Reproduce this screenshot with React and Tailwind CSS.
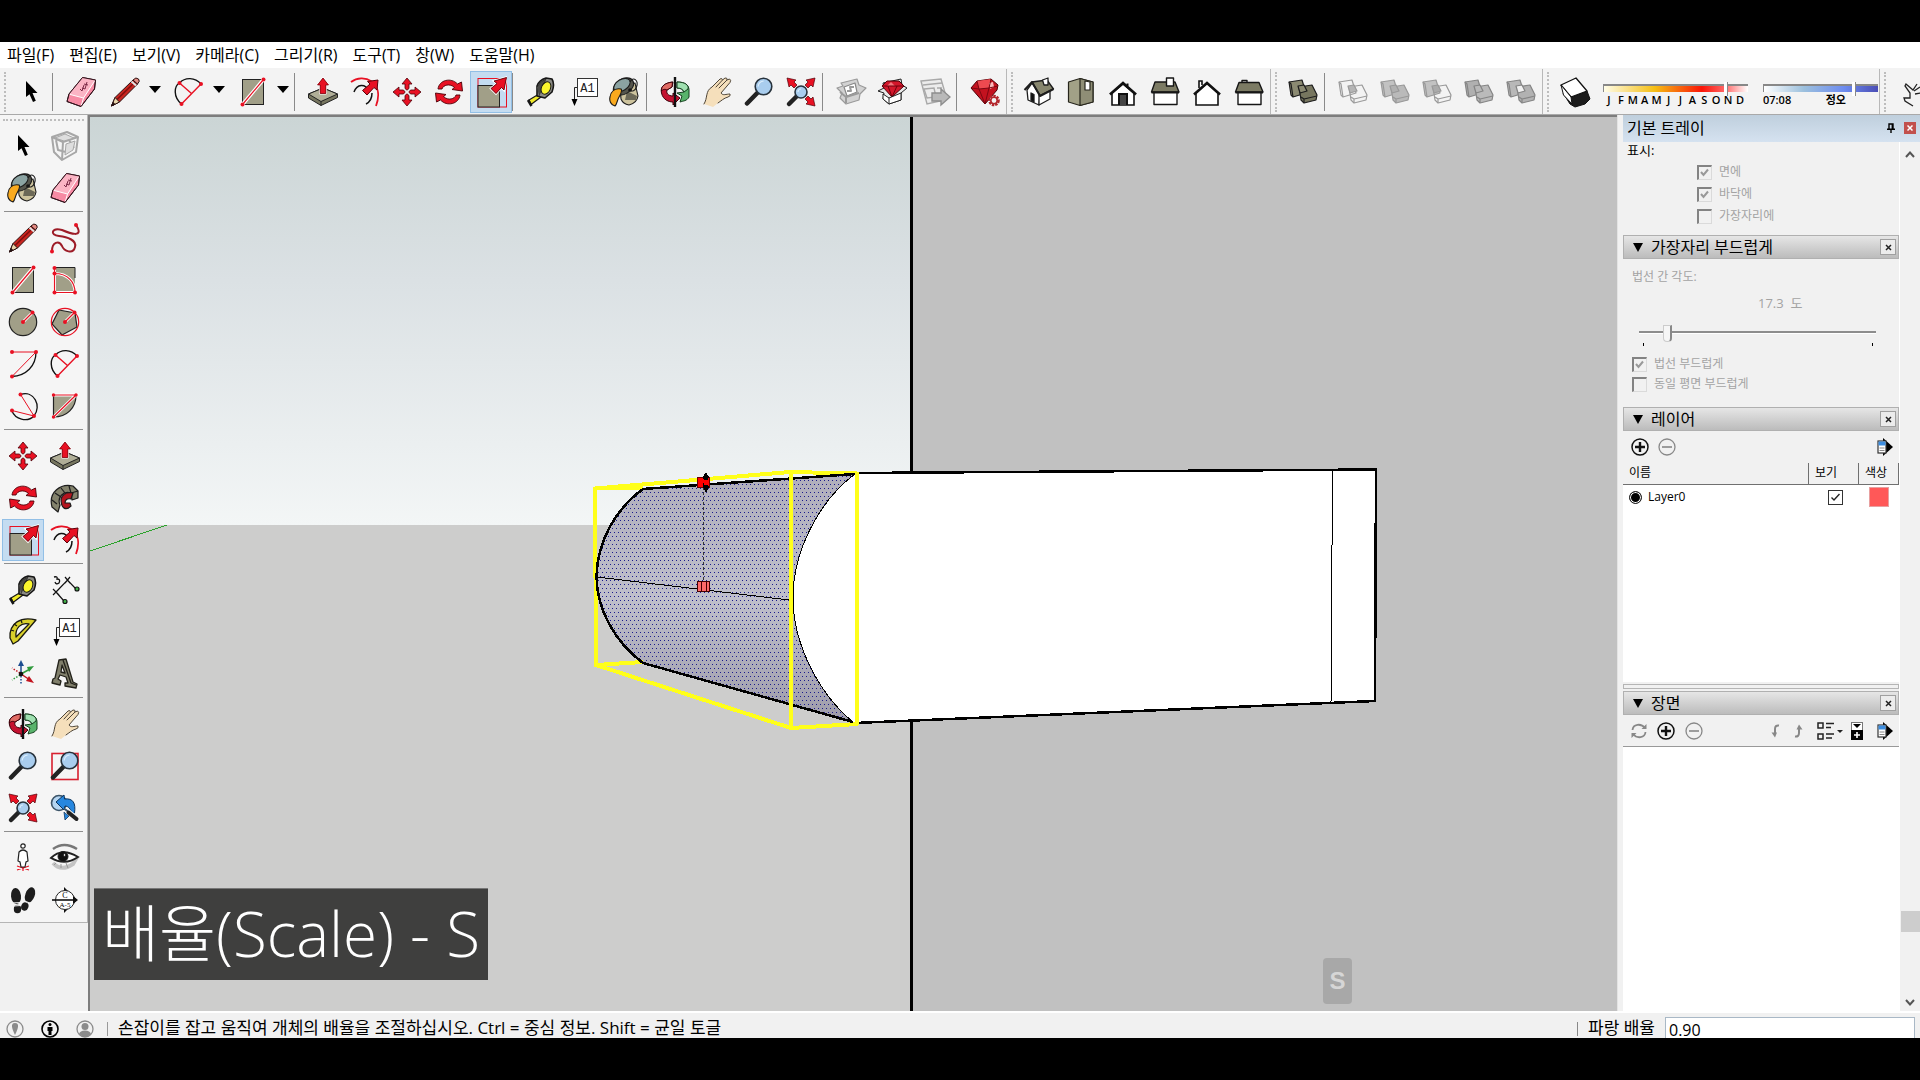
import React, { useState } from 'react';
import clsx from 'clsx';

const RED = '#e81123';
const STONE = '#a19f88';

// Small shared drawings used by more than one icon
const Dot = ({ x, y, r = 2, fill = RED }) => <circle cx={x} cy={y} r={r} fill={fill} />;

const Lens = ({ x, y, r, hx, hy }) => (
  <g>
    <path d={`M${x} ${y} L${hx} ${hy}`} stroke="#222" strokeWidth="4.5" strokeLinecap="round" />
    <circle cx={x} cy={y} r={r} fill="#a9cdee" stroke="#27323c" strokeWidth="1.6" />
    <path d={`M${x - r + 3} ${y} a${r - 3} ${r - 3} 0 0 1 ${r - 3} -${r - 3}`} fill="none" stroke="#d9ecfb" strokeWidth="1.2" />
  </g>
);

const Boxes = ({ back, front, overlap, line = '#8a8a8a' }) => (
  <g stroke={line} strokeWidth="1.2" strokeLinejoin="round">
    <path d="M2 6 L15 4 L19 17 L6 21 L4 19 Z" fill={back} />
    <path d="M2 6 L4 8 L6 21" fill="none" />
    <path d="M12 11 L25 9 L30 19 L29 24 L17 27 L14 24 Z" fill={front} />
    <path d="M14 21 L17 23 L30 20 M17 23 L17 27" fill="none" />
    <path d="M11 10 L17 9 L20 15 L13 17 Z" fill={overlap} />
  </g>
);

const icons = {
  select: <path d="M11 5 L11 21 L14.5 18.2 L18 26 L20.8 24.8 L17.5 17 L22.5 17 Z" fill="#000" />,
  eraser: (
    <g stroke="#33131c" strokeWidth="1" strokeLinejoin="round">
      <path d="M17.5 1.5 L30.5 4 L29.5 13 L16 30.5 L2 25.5 L4 18 Z" fill="#f78ba4" />
      <path d="M17.5 1.5 L30.5 4 L19 22 L4 18 Z" fill="#fbb4c4" stroke="none" />
      <path d="M4.5 18.3 L18.5 22 L30 4.5 M18.5 22 L16.3 29.5" fill="none" stroke="#fff" />
      <path d="M15 13 L17 15 L19 9 M17 12 L20 13 L22 6 M19 8 L23 9" fill="none" stroke="#7b2946" />
      <path d="M17.5 1.5 L30.5 4 L29.5 13 L16 30.5 L2 25.5 L4 18 Z" fill="none" />
    </g>
  ),
  pencil: (
    <g stroke="#2a1010" strokeWidth="1" strokeLinejoin="round">
      <path d="M2.5 30 L6 21.5 L24 4 L28.5 8 L10.5 26 Z" fill="#c9251f" />
      <path d="M8 23.5 L26 6" stroke="#7d0f10" strokeWidth="1.5" />
      <path d="M2.5 30 L6 21.5 L10.5 26 Z" fill="#e8d5ab" />
      <path d="M2.5 30 L4 26.5 L6 28.3 Z" fill="#111" />
      <path d="M24 4 Q27 0.5 29.5 3 Q31.5 5 28.5 8 Z" fill="#e58b83" />
      <path d="M22.5 5.5 L27 9.5" stroke="#e4e4e4" strokeWidth="2" />
    </g>
  ),
  arc: (
    <g fill="none">
      <path d="M8.5 28 C0 21 1 10 6.5 7 C12 1 22 1 28 8" stroke="#111" strokeWidth="1.4" />
      <path d="M28 8 L8.5 28 M6.5 7 L18.5 17.5" stroke={RED} strokeWidth="1.4" />
      <Dot x={6.5} y={7} /><Dot x={28} y={8} /><Dot x={8.5} y={28} />
    </g>
  ),
  rect: (
    <g>
      <rect x="5.5" y="3.5" width="21" height="25" fill={STONE} stroke="#222" />
      <path d="M5.5 28.5 L26.5 3.5" stroke="#fff" strokeWidth="3.5" />
      <path d="M5.5 28.5 L26.5 3.5" stroke={RED} strokeWidth="1.2" />
      <Dot x={5.5} y={28.5} /><Dot x={26.5} y={3.5} />
    </g>
  ),
  pushPull: (
    <g stroke="#222" strokeWidth="1" strokeLinejoin="round">
      <path d="M1.5 18 L16 12 L30.5 18 L30.5 21.5 L14 29.5 L1.5 22 Z" fill="#77765f" />
      <path d="M1.5 18 L16 12 L30.5 18 L14 25.5 Z" fill="#b0ae97" />
      <path d="M14 25.5 L14 29.5" />
      <path d="M16 2 L21.5 9 L18.8 9 L18.8 17.5 L13.2 17.5 L13.2 9 L10.5 9 Z" fill={RED} stroke="#fff" strokeWidth="2" paintOrder="stroke" />
      <path d="M16 2 L21.5 9 L18.8 9 L18.8 17.5 L13.2 17.5 L13.2 9 L10.5 9 Z" fill={RED} stroke="#6d0009" strokeWidth="0.7" />
    </g>
  ),
  offset: (
    <g fill="none">
      <path d="M2 6 C14 -3 36 5 27 30" stroke={RED} strokeWidth="1.8" />
      <path d="M5 16 C8 8 16 7 20 15 M23 17 C23 23 21 26 17 28" stroke="#111" strokeWidth="1.5" />
      <path d="M29 4 L28 14 L25 11.5 L18 19 L13.5 14.5 L21 8 L18.5 5.5 Z" fill={RED} stroke="#5a0008" strokeWidth="1" />
    </g>
  ),
  move: (
    <g>
      {[0, 90, 180, 270].map((deg) => (
        <path
          key={deg}
          d="M16 2 L21 8 L18 8 L18 12.5 L16 14.2 L14 12.5 L14 8 L11 8 Z"
          fill={RED}
          stroke="#4d0007"
          strokeWidth="0.8"
          transform={`rotate(${deg} 16 16)`}
        />
      ))}
    </g>
  ),
  rotate: (
    <g fill={RED} stroke="#4d0007" strokeWidth="0.9" strokeLinejoin="round">
      <path d="M5 13 C6 4 18 1 24.5 8 L28.5 6 L29.5 15 L19 13.5 L21.5 11.5 C17 7 10 9 9 13 Z" />
      <path d="M27 19 C26 28 14 31 7.5 24 L3.5 26 L2.5 17 L13 18.5 L10.5 20.5 C15 25 22 23 23 19 Z" />
    </g>
  ),
  scale: (
    <g>
      <rect x="3" y="2.5" width="28.5" height="28.5" fill="none" stroke={RED} strokeWidth="1" />
      <rect x="3" y="9.5" width="21.5" height="21.5" fill={STONE} stroke="#222" />
      <path d="M31.5 1.5 L29 14 L26.5 11.5 L21 17.5 L16 12.5 L22 7.5 L19 5 Z" fill={RED} stroke="#fff" strokeWidth="2.4" paintOrder="stroke" />
      <path d="M31.5 1.5 L29 14 L26.5 11.5 L21 17.5 L16 12.5 L22 7.5 L19 5 Z" fill={RED} stroke="#4d0007" strokeWidth="0.8" />
    </g>
  ),
  tape: (
    <g stroke="#161616" strokeLinejoin="round">
      <path d="M4 24 L14 18 L16 21 L6 28.5 Z" fill="#f1ea28" strokeWidth="1.2" />
      <path d="M3 24 L6.5 30" strokeWidth="2.5" />
      <path d="M12 10 Q14 4 21 2 L27 3 Q30 8 27 16 L20 22 L12 20 Z" fill="#8b8b85" strokeWidth="1.6" />
      <path d="M12 11 Q15 5 21 3 L14 20" fill="#4a4a46" strokeWidth="0.5" />
      <ellipse cx="21" cy="12" rx="4.5" ry="6.5" fill="#fbf62d" strokeWidth="1" transform="rotate(25 21 12)" />
    </g>
  ),
  text: (
    <g>
      <rect x="10.5" y="2.5" width="20" height="18" fill="#fff" stroke="#333" />
      <text x="20.5" y="15.500" textAnchor="middle" fontSize="12" fontFamily="Liberation Mono, monospace" fill="#222">A1</text>
      <path d="M10 11.5 H7.5 V24" fill="none" stroke="#222" />
      <path d="M4.5 23 H10.5 L7.5 30 Z" fill="#000" />
    </g>
  ),
  paint: (
    <g stroke="#1c1c1c" strokeWidth="1.1" strokeLinejoin="round">
      <path d="M11 12 L26 7 L29 20 Q28 27 20 29 Q14 28 12 23 Z" fill="#cdc39d" />
      <path d="M18 15 L28 20 L27 24 L16 24 Z" fill="#6b6857" stroke="none" />
      <ellipse cx="14.500" cy="10.500" rx="11" ry="7.500" fill="#55554c" transform="rotate(-32 14.500 10.500)" />
      <ellipse cx="13" cy="9" rx="9" ry="5.500" fill="#8ba3a2" transform="rotate(-32 13 9)" />
      <path d="M1 21 C2 15 6 12 12 13 C14 15 11 19 9.500 22 C8 25 8 28 6 30 C2 29 0 25 1 21 Z" fill="#faaa1e" />
      <path d="M21 6 C24 0 30 4 27.500 11 C26 15 23 16 21 14" fill="none" />
      <circle cx="21" cy="14" r="1.300" fill="#111" />
    </g>
  ),
  orbit: (
    <g strokeLinejoin="round" strokeWidth="1">
      <path d="M18 6 C26 6 30 9 30 14 L30 21 C28 25 24 25 21 26 L23 20 L18 17 L25 16 C24 13 21 12 18 12 Z" fill="#59b36b" stroke="#153f1e" />
      <path d="M18 6 C26 6 30 9 29 13 L25 16 C24 13 21 12 18 12 Z" fill="#9fe0b0" stroke="#153f1e" />
      <path d="M14 6 C5 7 1 11 2.5 17 C4 24 10 26 14 26 L14 29 L21 22 L14 17 L14 20 C9 20 7 17 8 14 L13 11 Z" fill="#c41230" stroke="#3b0009" />
      <path d="M13.5 6 C6 7 2 10 2.5 15 C5 12 8 14 8 14 L13 11 Z" fill="#e06b64" stroke="#3b0009" />
      <path d="M16 1 V31" stroke="#111" strokeWidth="2.4" />
    </g>
  ),
  pan: (
    <g strokeLinejoin="round" strokeLinecap="round">
      <path
        d="M3 28 C7 22 4 15 11 11 L19 3 Q21 1.5 21.5 4 L24 2 Q26.5 1.5 26 4 L28.5 3 Q30.5 4 29 6.5 L20 17 C22 20 25 18 29 18 Q30 20 27 21 C23 22 20 25 17 27 L12 31 Z"
        fill="#f5dfbb"
      />
      <path
        d="M3 28 C7 22 4 15 11 11 L19 3 Q21 1.5 21.5 4 L24 2 Q26.5 1.5 26 4 L28.5 3 Q30.5 4 29 6.5 L20 17 C22 20 25 18 29 18 Q30 20 27 21 C23 22 20 25 17 27 M15 11 L21.500 4 M18 12 L26 4"
        fill="none"
        stroke="#4e4538"
      />
    </g>
  ),
  zoom: <Lens x={20.5} y={10.5} r={8.3} hx={4} hy={27.5} />,
  zoomWindow: (
    <g>
      <rect x="3" y="3.5" width="26" height="26" fill="none" stroke="#d8202f" strokeWidth="1.6" />
      <Lens x={20.5} y={10.5} r={8.3} hx={4} hy={27.5} />
    </g>
  ),
  zoomExtents: (
    <g>
      <Lens x={16} y={16} r={6} hx={4} hy={28} />
      <path d="M2 2 L11 4 L9 6 L12 9 L9 12 L6 9 L4 11 Z" fill={RED} stroke="#4d0007" strokeWidth="0.7" />
      <path d="M30 2 L21 4 L23 6 L20 9 L23 12 L26 9 L28 11 Z" fill={RED} stroke="#4d0007" strokeWidth="0.7" />
      <path d="M30 30 L21 28 L23 26 L20 23 L23 20 L26 23 L28 21 Z" fill={RED} stroke="#4d0007" strokeWidth="0.7" />
    </g>
  ),
  previous: (
    <g>
      <circle cx="10" cy="11" r="7.500" fill="#b5d5f1" stroke="#3c5468" strokeWidth="1.600" />
      <path d="M7 10 L15 3 L15.500 7 C24 6 27 11 25.500 21 L23 22 C22 17 19 14 16 14 L15 18 Z" fill="#2787df" stroke="#0c345c" strokeWidth="1" />
      <path d="M15 20 L20 24 L16 28 Z" fill="#2787df" stroke="#0c345c" strokeWidth="0.8" />
      <path d="M16 17 L28 27" stroke="#f2f2f2" strokeWidth="5" />
      <path d="M15 16.500 L19 19.500" stroke="#3c5468" strokeWidth="2" />
      <path d="M19.500 20.500 L27.500 27" stroke="#222" strokeWidth="4" strokeLinecap="round" />
    </g>
  ),
  warehouse: (
    <g fill="#d2d2d2" stroke="#9a9a9a" strokeWidth="1.2" strokeLinejoin="round">
      <path d="M2 12 L8 10 L6 7 L22 3 L24 9 L31 12 L25 18 L24 24 L11 28 L5 22 L7 17 Z" />
      <path d="M9 11 L20 7 L22 16 L12 20 Z" fill="#fff" stroke="#888" />
      <path d="M5 16 L11 21 L11 27 M11 21 L24 17 M12 15 L16 15 L15 11 L19 11" fill="none" strokeWidth="2" />
    </g>
  ),
  warehouseGem: (
    <g strokeLinejoin="round" strokeWidth="1">
      <path d="M1 15 L7 12 L6 7 L24 3 L25 9 L30 12 L24 17 L24 24 L12 28 L6 23 L7 17 Z" fill="#e9e9e9" stroke="#222" />
      <path d="M5 10 L10 5 L22 5 L27 10 L15 21 Z" fill="#d3172b" stroke="#4d0007" />
      <path d="M10 10 L14 6 L18 10 Z" fill="#f3747c" />
      <path d="M5 10 H27 M15 21 L11 10 M15 21 L20 10" stroke="#70000c" fill="none" />
      <path d="M6 18 L12 22 L24 17 L24 24 L12 28 L6 23 Z" fill="#fff" stroke="#222" />
      <path d="M12 22 V28" stroke="#222" />
    </g>
  ),
  layout: (
    <g fill="#ececec" stroke="#a9a9a9" strokeWidth="1.4">
      <path d="M2 5 L22 3 L27 20 L26 24 L8 28 Z" />
      <path d="M4 9 L23 7 M5 13 L15 12 L17 21 L8 22 Z M18 12 L23 12" fill="none" />
      <path d="M13 17 H22 V13 L31 21 L22 29 V25 H13 Z" fill="#b9b9b9" stroke="#8d8d8d" />
    </g>
  ),
  gem: (
    <g strokeLinejoin="round" strokeWidth="1">
      <path d="M2 12 L8 5 L22 3 L29 9 L28 14 L16 28 Z" fill="#c3121f" stroke="#4d0007" />
      <path d="M8 5 L22 3 L20 12 L10 13 Z" fill="#ee4a50" stroke="none" />
      <path d="M20 7 L24 6 L25 11 L21 13 Z" fill="#fbb9bb" />
      <path d="M2 12 L10 13 L20 12 L29 10 M8 5 L10 13 L16 28 L20 12 L22 3" fill="none" stroke="#7d0711" />
      <circle cx="25" cy="24.5" r="4.6" fill="#f2f2f2" stroke="#b3262c" strokeWidth="2.4" strokeDasharray="2.4 1" />
      <circle cx="25" cy="24.5" r="3.2" fill="none" stroke="#b3262c" strokeWidth="1.6" />
    </g>
  ),
  viewIso: (
    <g stroke="#1d1d1d" strokeWidth="1.3" strokeLinejoin="round">
      <path d="M4 14 L9 7 L17 19 L16 29 L5 24 Z" fill="#fff" />
      <path d="M16 19 L27 14 L27 23 L16 29 Z" fill="#fff" />
      <path d="M9 6 L24 4 L30.500 13 L17 19.500 Z" fill="#87866e" />
      <path d="M1.500 14 L9 6 L17 20 L30.500 13" fill="none" strokeWidth="2" />
      <path d="M19.500 4 L25 2 L25 9 L21 9 Z" fill="#fff" />
      <path d="M8 17 L11 18.500 L11 26 L8 24.500 Z" fill="#111" />
    </g>
  ),
  viewTop: (
    <g stroke="#26251c" strokeWidth="1.2" strokeLinejoin="round">
      <path d="M3.500 6 L15 2.500 L28 6 V26 L15 29.500 L3.500 26 Z" fill="#a2a187" />
      <path d="M15 2.500 L28 6 V26 L15 29.500 Z" fill="#8f8e76" />
      <path d="M20 5 L25 6 V14 L20 14 Z" fill="#fff" />
    </g>
  ),
  viewFront: (
    <g stroke="#111" strokeWidth="2" strokeLinejoin="miter">
      <path d="M5 17 L16 8 L27 17 V29 H5 Z" fill="#fff" strokeWidth="1.600" />
      <path d="M12 29 V18 H20 V29" fill="#444" />
      <path d="M3 18.500 L16 7 L29 18.500" fill="none" strokeWidth="2.800" />
      <path d="M20.500 10 V7.500" />
    </g>
  ),
  viewRight: (
    <g stroke="#161616" strokeWidth="1.400" strokeLinejoin="round">
      <rect x="5" y="15" width="23" height="13.500" fill="#fff" />
      <path d="M6 6 H26 L30 16 H2.500 Z" fill="#7c7b64" />
      <path d="M2.500 16.500 H30" strokeWidth="2" />
      <rect x="17.500" y="2" width="7" height="8" fill="#fff" />
    </g>
  ),
  viewBack: (
    <g stroke="#111" strokeWidth="1.600">
      <path d="M8 12 V5 H11 V9" fill="#fff" />
      <path d="M5 17 L16 7 L27 17 V29 H5 Z" fill="#fff" />
      <path d="M3 18.500 L16 7 L29 18.500" fill="none" strokeWidth="2.600" />
    </g>
  ),
  viewLeft: (
    <g stroke="#161616" strokeWidth="1.400" strokeLinejoin="round">
      <path d="M9 7 V4.500 H14 V7" fill="#ddd" />
      <rect x="5" y="15" width="23" height="13.500" fill="#fff" />
      <path d="M6 6.500 H26 L30 16 H2.500 Z" fill="#7c7b64" />
      <path d="M2.500 16.500 H30" strokeWidth="2" />
    </g>
  ),
  outerShell: <Boxes back="#8b8a72" front="#77765f" overlap="#8b8a72" line="#1d1d1d" />,
  intersect: <Boxes back="none" front="none" overlap="#b5b5b5" line="#9b9b9b" />,
  union: <Boxes back="#c2c2c2" front="#bababa" overlap="#b0b0b0" line="#999" />,
  subtract: <Boxes back="#c2c2c2" front="none" overlap="#aaa" line="#999" />,
  trim: <Boxes back="#b0b0b0" front="#bababa" overlap="#b8b8b8" line="#858585" />,
  split: <Boxes back="#b8b8b8" front="#b2b2b2" overlap="#f0f0f0" line="#858585" />,
  shadow: (
    <g strokeLinejoin="round" stroke="#111">
      <path d="M4 17 L11 28 L16 31 L26 28 L31 23 L28 15 L12 21 Z" fill="#1c1c1c" />
      <path d="M2 9 L17 2 L28 15 L12 21 Z" fill="#fff" strokeWidth="1.300" />
      <path d="M2 9 L4.500 19 L13 28 L12 21 Z" fill="#fff" />
    </g>
  ),
  gesture: (
    <path
      d="M17 30 L9 25 L8 22 L14 22 L14 17 L9 10 L10 8 L17 14 L21 8 M18 15 L24 11 M19 18 L25 17"
      fill="none"
      stroke="#222"
      strokeWidth="1.300"
    />
  ),
  component: (
    <g fill="none" stroke="#a7a7a7" strokeWidth="2" strokeLinejoin="round">
      <path d="M3 7 L18 2 L29 7 L27 22 L13 30 L5 22 Z" />
      <path d="M3 7 L14 12 L29 7 M14 12 L13 30 M7 10 L9 20 L17 22 M17 6 L22 13 L25 18" />
      <path d="M6 8 L16 4 L25 8 L15 11 Z M17 14 L26 11 L24 20 L16 25 Z" fill="#dedede" strokeWidth="1" />
    </g>
  ),
  freehand: (
    <g fill="none">
      <path d="M27 3 C36 17 20 11 13 8 C3 5 0 13 10 14 C18 15 28 18 26 25 C24 33 15 29 13 24 C10 18 3 20 3 29" stroke="#9d1c27" strokeWidth="2" />
      <Dot x={27} y={3} /><Dot x={3} y={29.500} />
    </g>
  ),
  rotatedRect: (
    <g>
      <rect x="5.500" y="3.500" width="20.500" height="25" fill={STONE} />
      <path d="M26 14 V3.500 H5.500" fill="none" stroke="#222" />
      <path d="M5.500 9.500 C19 9.500 26 18 26 28.500 H5.500 V4" fill="none" stroke="#fff" strokeWidth="3" />
      <path d="M5.500 9.500 C19 9.500 26 18 26 28.500 H5.500 V4" fill="none" stroke={RED} strokeWidth="1.200" />
      <Dot x={5.500} y={4} /><Dot x={5.500} y={9.500} /><Dot x={5.500} y={28.500} /><Dot x={26} y={28.500} />
    </g>
  ),
  circle: (
    <g>
      <circle cx="16" cy="16" r="13.700" fill={STONE} stroke="#222" strokeWidth="1.200" />
      <path d="M16 16 L25.500 6.500" stroke="#fff" strokeWidth="3" />
      <path d="M16 16 L25.500 6.500" stroke={RED} strokeWidth="1.200" />
      <Dot x={16} y={16} /><Dot x={25.500} y={6.500} />
    </g>
  ),
  polygon: (
    <g>
      <path d="M10 4 L26 7 L28 21 L13 29 L3 18 Z" fill={STONE} stroke="#222" strokeWidth="1.200" />
      <circle cx="16" cy="16" r="13.700" fill="none" stroke={RED} strokeWidth="1.200" />
      <path d="M16 16 L25.500 6.500" stroke="#fff" strokeWidth="3" />
      <path d="M16 16 L25.500 6.500" stroke={RED} strokeWidth="1.200" />
      <Dot x={16} y={16} /><Dot x={25.500} y={6.500} />
    </g>
  ),
  arcCenter: (
    <g fill="none">
      <path d="M29 4 C29 18 19 28 5 28.500" stroke="#111" strokeWidth="1.300" />
      <path d="M5 4 H29 L5 28.500" stroke={RED} />
      <Dot x={5} y={4} /><Dot x={29} y={4} /><Dot x={5} y={28.500} />
    </g>
  ),
  arcThree: (
    <g fill="none">
      <path d="M13.500 4.500 C27 0 35 16 27 26 C20 33 8 29 5 21" stroke="#111" strokeWidth="1.300" />
      <path d="M13.500 4.500 L27 26 L5 20.500" stroke={RED} />
      <Dot x={13.500} y={4.500} /><Dot x={5} y={20.500} /><Dot x={27} y={26} />
    </g>
  ),
  pie: (
    <g>
      <path d="M4.500 5 H27 C27 18 18 27 4.500 27 Z" fill={STONE} stroke="#222" strokeWidth="1.200" />
      <path d="M4.500 27 L27 5 H4.500" fill="none" stroke="#fff" strokeWidth="3" />
      <path d="M4.500 27 L27 5 H4.500" fill="none" stroke={RED} strokeWidth="1.200" />
      <Dot x={4.500} y={5} r={1.700} /><Dot x={27} y={5} r={1.700} /><Dot x={4.500} y={27} r={1.700} />
    </g>
  ),
  followMe: (
    <g stroke="#1c1c1c" strokeWidth="1.200" strokeLinejoin="round">
      <path d="M3 25 C-1 10 12 1 24 4 L29 9 L29 16 L23 18 L22 11 C14 8 8 16 11 23 L9 30 Z" fill="#83826c" />
      <path d="M3 18 L8 22 M6 11 L12 15 M12 6 L16 11 M20 4 L22 11 L29 9" fill="none" />
      <path d="M12 17 C14 11 19 10 24 11 L22 17 C18 16 16 18 16 21 L21 21 L22 24 C17 29 12 27 12 17 Z" fill="#b5151f" />
    </g>
  ),
  dimension: (
    <g fill="none" stroke="#111" strokeWidth="1.200">
      <path d="M7 18 L18.500 6 L27 15 M7 18 L15 27 M16 3 L21 9 M21 3 L16 9 M4 15 L10 21 M10 15 L4 21" />
      <path d="M5 3 Q9 2 8 5 Q12 5 10 9 Q7 11 6 8" strokeWidth="1.300" />
      <Dot x={28} y={15} fill="#42b549" /><Dot x={16} y={27.500} fill="#42b549" />
    </g>
  ),
  protractor: (
    <g stroke="#1a1a10" strokeWidth="1.300" strokeLinejoin="round">
      <path d="M29 4 C14 0 2 7 3 22 L6 28 L11 25 Z" fill="#d9d02a" />
      <path d="M22 8 C14 6 8 12 9 21 Z" fill="#f4f4f4" />
      <path d="M4 14 L7 15 M7 8 L10 10 M14 4 L15 7" />
    </g>
  ),
  axes: (
    <g fill="none" strokeWidth="1.500">
      <path d="M14 16 V6" stroke="#1c4d91" /><path d="M11 8 L14 2 L17 8 Z" fill="#1c4d91" />
      <path d="M14 16 L23 11" stroke="#2f9a3c" /><path d="M20 9 L27 8 L22 14 Z" fill="#2f9a3c" />
      <path d="M14 16 L23 22" stroke="#c3141f" /><path d="M22 18 L27 25 L19 23 Z" fill="#c3141f" />
      <path d="M14 18 V27" stroke="#1c4d91" strokeDasharray="1.500 1.500" />
      <path d="M13 17 L5 22" stroke="#2f9a3c" strokeDasharray="1.500 1.500" />
      <path d="M13 15 L5 10" stroke="#c3141f" strokeDasharray="1.500 1.500" />
      <Dot x={14} y={16} r={2.300} fill="#111" />
    </g>
  ),
  // A solid block shaped like the tool's three dimensional capital
  text3d: (
    <g stroke="#22211a" strokeWidth="1.300" strokeLinejoin="round">
      <path d="M10 2 L17 1 L24 24 L28 26 L27 30 L16 28 L16 25 L19 25 L17 19 L11 17 L9 21 L12 23 L11 27 L3 25 L4 21 L6 20 Z" fill="#807f6b" />
      <path d="M13 7 L12 14 L16 15 Z" fill="#f2f2f2" />
      <path d="M14 2 L22 25 L27 27" fill="none" />
    </g>
  ),
  camera: (
    <g fill="none" strokeWidth="1.200">
      <path d="M10 28 L22 24 M10 24 L22 28 M16 22 V29" stroke={RED} />
      <path d="M12 10 Q16 6 20 10 L21 19 L19 20 L18 25 L14 25 L13 20 L11 19 Z" fill="#fff" stroke="#222" />
      <circle cx="16" cy="4" r="2.200" fill="#fff" stroke="#222" />
    </g>
  ),
  look: (
    <g fill="none" stroke="#222">
      <path d="M4 7 Q15 -1 28 7" stroke="#777" strokeWidth="2.500" />
      <path d="M4 21 Q12 30 24 22 L28 15" stroke="#c4c4c4" strokeWidth="4" />
      <path d="M2 16 Q13 5 29 15 Q16 24 2 16 Z" fill="#fff" strokeWidth="2" />
      <circle cx="14" cy="14.500" r="5" fill="#111" /><Dot x={15.500} y={13} r={1.300} fill="#fff" />
      <path d="M7 21 L5 23 M12 22 L12 26 M17 21 L19 26" stroke="#999" />
    </g>
  ),
  walk: (
    <g fill="#1d1d1d">
      <ellipse cx="9" cy="12" rx="5" ry="8" transform="rotate(-6 9 12)" />
      <ellipse cx="10.500" cy="25" rx="3.700" ry="4.300" />
      <ellipse cx="23" cy="11" rx="4.700" ry="8" transform="rotate(20 23 11)" />
      <ellipse cx="18" cy="22.500" rx="3.600" ry="4.200" transform="rotate(20 18 22)" />
      <path d="M5 19 L14 18.500 M6 22 L14 21.500 M16 16.500 L24 19.500" stroke="#f2f2f2" strokeWidth="1.200" />
    </g>
  ),
  section: (
    <g>
      <path d="M15 3 L28 16 L15 29 Z" fill="#111" />
      <circle cx="16" cy="16" r="9.500" fill="#fff" stroke="#222" />
      <path d="M3 16 H28" stroke="#111" strokeWidth="1.600" />
      <path d="M24 12 L29 16 L24 20 Z" fill="#111" />
      <text x="16" y="14" textAnchor="middle" fontSize="8" fontFamily="Liberation Serif, serif">C</text>
      <text x="16" y="23" textAnchor="middle" fontSize="7" fontFamily="Liberation Serif, serif">A-5</text>
    </g>
  ),
};

const Icon = ({ name }) => (
  <svg viewBox="0 0 32 32" className="w-8 h-8 shrink-0" aria-hidden="true">
    {icons[name]}
  </svg>
);

const ToolButton = ({ name, label, active, onClick }) => (
  <button
    type="button"
    aria-label={label}
    onClick={onClick}
    className={clsx(
      'w-[42px] h-[42px] shrink-0 flex items-center justify-center border',
      active ? 'bg-[#c4dcf1] border-[#92bfe6]' : 'border-transparent'
    )}
  >
    <Icon name={name} />
  </button>
);

const SplitButton = ({ name, label }) => (
  <div className="w-16 shrink-0 flex items-center pl-0.5">
    <button type="button" aria-label={label} className="w-[42px] flex justify-center">
      <Icon name={name} />
    </button>
    <button type="button" aria-label={`${label} 메뉴`} className="w-5 flex justify-start pb-1">
      <svg viewBox="0 0 12 7" className="w-3 h-[7px] ml-[3px]"><path d="M0 0 H12 L6 7 Z" /></svg>
    </button>
  </div>
);

const Separator = () => (
  <div className="w-2 shrink-0 flex justify-start">
    <div className="w-px h-[38px] bg-[#8a8a8a]" />
  </div>
);

const Grip = ({ first }) => (
  <div className={clsx('shrink-0 flex items-center self-stretch', first ? 'w-2.5 pl-1' : 'w-3 border-l border-[#b8b8b8] pl-1')}>
    <div className="h-10 border-l-2 border-dotted border-[#bdbdbd]" />
  </div>
);

const menus = ['파일(F)', '편집(E)', '보기(V)', '카메라(C)', '그리기(R)', '도구(T)', '창(W)', '도움말(H)'];

const toolGroups = [
  [['tape', '줄자'], ['text', '텍스트'], ['paint', '페인트']],
  [['orbit', '궤도'], ['pan', '이동 보기'], ['zoom', '확대'], ['zoomExtents', '범위 확대']],
  [['warehouse', '3D 웨어하우스'], ['warehouseGem', '확장 프로그램'], ['layout', '레이아웃으로 보내기']],
];

const viewTools = [
  ['viewIso', '등각'], ['viewTop', '평면'], ['viewFront', '정면'],
  ['viewRight', '우측'], ['viewBack', '배면'], ['viewLeft', '좌측'],
];

const solidTools = [
  ['intersect', '교차'], ['union', '결합'], ['subtract', '빼기'], ['trim', '다듬기'], ['split', '분할'],
];

const sideGroups = [
  [['select', '선택'], ['component', '구성요소'], ['paint', '페인트'], ['eraser', '지우개']],
  [
    ['pencil', '선'], ['freehand', '자유선'], ['rect', '직사각형'], ['rotatedRect', '회전 직사각형'],
    ['circle', '원'], ['polygon', '다각형'], ['arcCenter', '호'], ['arc', '2점 호'],
    ['arcThree', '3점 호'], ['pie', '파이'],
  ],
  [['move', '이동'], ['pushPull', '밀기/끌기'], ['rotate', '회전'], ['followMe', '따라가기'], ['scale', '배율'], ['offset', '오프셋']],
  [['tape', '줄자'], ['dimension', '치수'], ['protractor', '각도기'], ['text', '텍스트'], ['axes', '축'], ['text3d', '3D 텍스트']],
  [['orbit', '궤도'], ['pan', '이동 보기'], ['zoom', '확대'], ['zoomWindow', '창 확대'], ['zoomExtents', '범위 확대'], ['previous', '이전']],
  [['camera', '카메라 배치'], ['look', '둘러보기'], ['walk', '걷기'], ['section', '단면']],
];

const MenuBar = () => (
  <nav className="h-[26px] shrink-0 bg-white flex items-center gap-[15px] pl-[7px] text-base leading-5">
    {menus.map((menu) => (
      <button key={menu} type="button">{menu}</button>
    ))}
  </nav>
);

const barThumb =
  '[&::-webkit-slider-thumb]:appearance-none [&::-webkit-slider-thumb]:w-1 [&::-webkit-slider-thumb]:h-[14px] [&::-webkit-slider-thumb]:bg-white [&::-webkit-slider-thumb]:border-r [&::-webkit-slider-thumb]:border-[#888]';

const ShadowSliders = () => (
  <div className="flex shrink-0 gap-[15px] pl-[7px] pr-[1px] pt-[12px] self-start text-[11px] leading-3 font-semibold">
    <div className="w-[145px]">
      <input
        type="range"
        min="0"
        max="100"
        defaultValue="86"
        aria-label="날짜"
        className={clsx('block appearance-none w-full h-2 mt-[3px] border-t-2 border-l border-[#888] bg-[linear-gradient(90deg,#fffde9,#f5bf14_35%,#fa1507_68%,#f66_84%,#fff)]', barThumb)}
      />
      <div className="grid grid-cols-12 text-center mt-0.5 pr-0.5">
        {'JFMAMJJASOND'.split('').map((month, index) => <span key={index}>{month}</span>)}
      </div>
    </div>
    <div className="w-[115px]">
      <input
        type="range"
        min="0"
        max="100"
        defaultValue="80"
        aria-label="시간"
        className={clsx('block appearance-none w-full h-2 mt-[3px] border-t-2 border-l border-[#888] bg-[linear-gradient(90deg,#fff,#9cc0dd_35%,#6d8cf0_70%,#4a4db5)]', barThumb)}
      />
      <div className="flex justify-between pr-8 mt-0.5">
        <span>07:08</span>
        <span>정오</span>
      </div>
    </div>
  </div>
);

const Toolbar = ({ tool, onSelect }) => {
  const renderTool = ([name, label]) => (
    <ToolButton key={name} name={name} label={label} active={tool === name} onClick={() => onSelect(name)} />
  );

  return (
    <div className="h-[47px] shrink-0 bg-[#f3f3f3] border-b border-[#a9a9a9] flex items-center overflow-hidden pt-[1px]">
      <Grip first />
      {renderTool(['select', '선택'])}
      <Separator />
      {renderTool(['eraser', '지우개'])}
      <SplitButton name="pencil" label="선" />
      <SplitButton name="arc" label="호" />
      <SplitButton name="rect" label="직사각형" />
      <Separator />
      {[['pushPull', '밀기/끌기'], ['offset', '오프셋'], ['move', '이동'], ['rotate', '회전'], ['scale', '배율']].map(renderTool)}
      {toolGroups.map((group, index) => (
        <React.Fragment key={index}>
          <Separator />
          {group.map(renderTool)}
        </React.Fragment>
      ))}
      <Separator />
      {renderTool(['gem', '확장 관리자'])}
      <Grip />
      {viewTools.map(renderTool)}
      <Grip />
      {renderTool(['outerShell', '외부 셸'])}
      <Separator />
      {solidTools.map(renderTool)}
      <Grip />
      {renderTool(['shadow', '그림자'])}
      <ShadowSliders />
      <Grip />
      {renderTool(['gesture', '상호 작용'])}
    </div>
  );
};

const SideTools = ({ tool, onSelect }) => (
  <aside className="w-[88px] shrink-0 bg-[#f1f1f1]">
    <div className="bg-[#f5f5f5] border-r border-b border-[#b5b5b5] pb-px">
      <div className="h-[10px] pt-1 px-[3px]">
        <div className="border-t-2 border-dotted border-[#bdbdbd]" />
      </div>
      {sideGroups.map((group, index) => (
        <div key={index}>
          {index > 0 && <div className="h-2 px-1 pt-[2px]"><div className="h-px bg-[#8f8f8f]" /></div>}
          <div className="grid grid-cols-[42px_42px] pl-0.5">
            {group.map(([name, label]) => (
              <ToolButton key={name} name={name} label={label} active={tool === name} onClick={() => onSelect(name)} />
            ))}
          </div>
        </div>
      ))}
    </div>
  </aside>
);

const endFace =
  'M643 489 L855 474 C820 500 793 550 793 598 C793 645 820 695 853 722 L643 663 C615 642 597 610 596 577 C597 540 617 508 643 489 Z';

// The modelling scene
const Scene = () => (
  <svg
    viewBox="90 117 1527 894"
    preserveAspectRatio="xMidYMid slice"
    shapeRendering="crispEdges"
    className="absolute inset-0 w-full h-full"
  >
    <defs>
      <linearGradient id="sky" x1="0" y1="0" x2="0" y2="1">
        <stop offset="0" stopColor="#cbd5d5" />
        <stop offset="0.4" stopColor="#dbe1e4" />
        <stop offset="1" stopColor="#f3f6f6" />
      </linearGradient>
      <linearGradient id="face" x1="0" y1="0" x2="0" y2="1">
        <stop offset="0" stopColor="#b0aebb" />
        <stop offset="0.5" stopColor="#bfbfcb" />
        <stop offset="1" stopColor="#9e9caa" />
      </linearGradient>
      <pattern id="dots" width="4" height="8" patternUnits="userSpaceOnUse">
        <rect x="0" y="0" width="1" height="1" fill="#1b1b8c" />
        <rect x="2" y="4" width="1" height="1" fill="#1b1b8c" />
      </pattern>
    </defs>
    <rect x="90" y="117" width="822" height="409" fill="url(#sky)" />
    <rect x="90" y="525" width="822" height="486" fill="#cdcdcc" />
    <rect x="911" y="117" width="706" height="894" fill="#c1c1c1" />
    <path d="M90 551 L167 525" stroke="#2ba32b" strokeWidth="1" />
    <path d="M911.500 117 V1011" stroke="#000" strokeWidth="3" />

    <path d="M855 473 L1376 469 L1375 701 L855 723 C770 662 770 545 855 473 Z" fill="#fff" />
    <path d="M855 473 L1376 469.500 L1375 701 L855 723" fill="none" stroke="#000" strokeWidth="2.500" />
    <path d="M1332.500 470 L1331 703" stroke="#000" strokeWidth="1" />

    <path d={endFace} fill="url(#face)" />
    <path d={endFace} fill="url(#dots)" />
    <path d="M855 474 C820 500 793 550 793 598 C793 645 820 695 853 722" fill="none" stroke="#000" strokeWidth="1" />
    <path d="M597 577 L789 600" stroke="#000" strokeWidth="1" />
    <path d="M703.500 487 V582" stroke="#333" strokeWidth="1" strokeDasharray="3 2" />

    <path d="M643 662 L596 665 L595 488.500 L643 488 M595 488.500 L790 472 L857 473.500 V724 L791 728 L596 665" fill="none" stroke="#ffff1a" strokeWidth="4" strokeLinejoin="round" />
    <path d="M855 474 L643 489 C617 508 597 540 596.500 577 C597 610 615 642 643 663 L853 722" fill="none" stroke="#000" strokeWidth="2.500" />
    <path d="M791 472 V728" stroke="#ffff1a" strokeWidth="4" />

    <rect x="697" y="477.500" width="12" height="10" fill="#f00" stroke="#600" />
    <path d="M706 472 L709 477 L708 480 L708 485 L709 487 L706 493 L703 487 L704 480 L703 477 Z" fill="#000" />
    <path d="M704 480 H708 V485 H704 Z" fill="#f00" />
    <rect x="697" y="581" width="12" height="10" fill="#ff6969" stroke="#400" />
    <path d="M701 581 V591 M706 581 V591" stroke="#400" strokeWidth="1" />
  </svg>
);

const Viewport = () => (
  <main className="relative flex-1 min-w-0 border-l-2 border-t-2 border-[#7d7d7d] overflow-hidden">
    <Scene />
    <div className="absolute left-1 bottom-[31px] w-[394px] h-[92px] bg-[#3f3f3e] border-t border-[#777] text-white flex items-center justify-center pb-1 text-[62px] leading-none font-light whitespace-nowrap">
      배율(Scale) - S
    </div>
    <kbd className="absolute right-[265px] bottom-[7px] w-[29px] h-[46px] rounded bg-[#a8a8a8] text-[#d6d6d6] font-['Liberation_Sans',sans-serif] font-bold text-2xl flex items-center justify-center">
      S
    </kbd>
  </main>
);

const SectionHeader = ({ title }) => (
  <div className="h-6 shrink-0 border border-[#b0b0b0] bg-linear-to-b from-[#e6e6e6] to-[#bcbcbc] flex items-center pl-[9px] pr-[2px]">
    <svg viewBox="0 0 10 9" className="w-[10px] h-[9px] mr-2"><path d="M0 0 H10 L5 9 Z" /></svg>
    <h2 className="flex-1 text-base leading-5">{title}</h2>
    <button type="button" aria-label={`${title} 닫기`} className="w-4 h-4 border border-[#a0a0a0] bg-[#ececec] flex items-center justify-center">
      <svg viewBox="0 0 7 7" className="w-[7px] h-[7px]"><path d="M1 1 L6 6 M6 1 L1 6" stroke="#222" strokeWidth="1.500" /></svg>
    </button>
  </div>
);

const Tick = ({ label, checked, className }) => (
  <label className={clsx('flex items-center gap-[7px] text-[#a3a3a3]', className)}>
    <input
      type="checkbox"
      defaultChecked={checked}
      disabled
      className="appearance-none w-[15px] h-[15px] border border-t-2 border-l-2 border-[#dadada] border-t-[#838383] border-l-[#838383] peer"
    />
    <svg viewBox="0 0 9 9" className="w-[9px] h-[9px] -ml-[19px] mr-[3px] hidden peer-checked:block">
      <path d="M1 4 L3.500 7 L8 1.500" fill="none" stroke="#999" strokeWidth="2" />
    </svg>
    <span>{label}</span>
  </label>
);

const AddIcon = () => (
  <svg viewBox="0 0 18 18" className="w-[18px] h-[18px]" fill="none" stroke="#111">
    <circle cx="9" cy="9" r="8" strokeWidth="1.500" />
    <path d="M4 9 H14 M9 4 V14" strokeWidth="2.400" />
  </svg>
);

const RemoveIcon = () => (
  <svg viewBox="0 0 18 18" className="w-[18px] h-[18px]" fill="none" stroke="#888">
    <circle cx="9" cy="9" r="8" strokeWidth="1.300" />
    <path d="M4 9 H14" strokeWidth="1.600" />
  </svg>
);

const DetailsIcon = () => (
  <svg viewBox="0 0 16 18" className="w-4 h-[18px]">
    <path d="M6 0 L16 9 L6 18 Z" />
    <rect x="1" y="3" width="8" height="12" fill="#fff" stroke="#333" strokeWidth="1.200" />
    <rect x="1.500" y="3.500" width="7" height="4" fill="#3c8de0" />
    <path d="M2.500 10 H7.500 M2.500 12.500 H7.500" stroke="#888" />
  </svg>
);

const Layers = () => (
  <section>
    <SectionHeader title="레이어" />
    <div className="h-8 flex items-center pl-2 pr-[6px] gap-[9px]">
      <button type="button" aria-label="레이어 추가"><AddIcon /></button>
      <button type="button" aria-label="레이어 삭제"><RemoveIcon /></button>
      <button type="button" aria-label="레이어 세부 정보" className="ml-auto"><DetailsIcon /></button>
    </div>
    <div className="h-[219px] bg-white">
      <table className="w-full table-fixed border-collapse text-xs">
        <thead>
          <tr className="h-[21px] bg-[#f1f1f1] text-left border-b border-[#707070]">
            <th className="font-normal pl-1.5 border-r border-[#707070]">이름</th>
            <th className="font-normal pl-1.5 w-[50px] border-r border-[#707070]">보기</th>
            <th className="font-normal pl-1.5 w-10 border-r border-[#707070]">색상</th>
          </tr>
        </thead>
        <tbody>
          <tr className="h-[26px]">
            <td className="pl-1.5">
              <label className="flex items-center gap-1.5">
                <input type="radio" name="layer" defaultChecked className="appearance-none w-[13px] h-[13px] rounded-full border border-[#222] bg-black shadow-[inset_0_0_0_1px_#fff]" />
                Layer0
              </label>
            </td>
            <td>
              <label className="flex pl-[19px]">
                <input type="checkbox" defaultChecked aria-label="Layer0 보기" className="appearance-none w-[15px] h-[15px] border border-[#333] bg-white peer" />
                <svg viewBox="0 0 9 9" className="w-[9px] h-[9px] -ml-3 mt-[3px] hidden peer-checked:block">
                  <path d="M0.500 4.500 L3 7 L8.500 1" fill="none" stroke="#222" strokeWidth="1.400" />
                </svg>
              </label>
            </td>
            <td>
              <button type="button" aria-label="Layer0 색상" className="block ml-[10px] w-5 h-5 bg-[#ff5858] border border-[#e8a0a0]" />
            </td>
          </tr>
        </tbody>
      </table>
    </div>
    <div className="h-[5px] my-[2px] border border-[#b5b5b5]" />
  </section>
);

const Scenes = () => (
  <section className="flex-1 min-h-0 flex flex-col">
    <SectionHeader title="장면" />
    <div className="h-8 shrink-0 flex items-center pl-2 pr-[6px] border-b border-[#999]">
      <button type="button" aria-label="장면 업데이트" className="mr-[10px]">
        <svg viewBox="0 0 16 16" className="w-4 h-4" fill="none" stroke="#888" strokeWidth="1.800">
          <path d="M1.500 7 C2 1 10 0 14 5 M14.500 9 C14 15 6 16 2 11" />
          <path d="M15.500 1 V6 H10.500 Z M0.500 15 V10 H5.500 Z" fill="#888" stroke="none" />
        </svg>
      </button>
      <button type="button" aria-label="장면 추가" className="mr-[10px]"><AddIcon /></button>
      <button type="button" aria-label="장면 제거"><RemoveIcon /></button>
      <button type="button" aria-label="장면을 아래로" className="ml-auto mr-3">
        <svg viewBox="0 0 12 14" className="w-3 h-[14px]">
          <path d="M10 1.500 Q6 1 6 5 V9" fill="none" stroke="#888" strokeWidth="2" />
          <path d="M2.500 8.500 H8 L6 13.500 Z" fill="#888" />
        </svg>
      </button>
      <button type="button" aria-label="장면을 위로" className="mr-3">
        <svg viewBox="0 0 12 14" className="w-3 h-[14px]">
          <path d="M2 12.500 Q6 13 6 9 V5" fill="none" stroke="#888" strokeWidth="2" />
          <path d="M3.500 5.500 H9.500 L6 0.500 Z" fill="#888" />
        </svg>
      </button>
      <button type="button" aria-label="보기 옵션" className="mr-2">
        <svg viewBox="0 0 26 18" className="w-[26px] h-[18px]" fill="none" stroke="#222" strokeWidth="1.500">
          <rect x="1" y="1" width="5" height="5" /><rect x="1" y="12" width="5" height="5" />
          <path d="M9 1.500 H17 M9 5.500 H14 M9 12 H17 M9 16 H15" />
          <path d="M20 8 H26 L23 11 Z" fill="#222" stroke="none" />
        </svg>
      </button>
      <button type="button" aria-label="세부 정보 표시" className="mr-[14px]">
        <svg viewBox="0 0 12 18" className="w-3 h-[18px]">
          <rect x="0.500" y="0.500" width="11" height="17" fill="#fff" stroke="#777" />
          <path d="M2 2 H10 L6 6 Z M0 8 H12 V18 H0 Z" />
          <path d="M3 13 H9 M6 10 V16" stroke="#fff" strokeWidth="1.600" />
        </svg>
      </button>
      <button type="button" aria-label="장면 메뉴"><DetailsIcon /></button>
    </div>
    <div className="flex-1 bg-white" />
  </section>
);

const Tray = () => (
  <aside className="w-[303px] shrink-0 bg-[#f1f1f1] border-l border-[#e3e3e3] pl-[5px] flex flex-col">
    <div className="h-[27px] shrink-0 bg-linear-to-b from-[#bfcfdd] to-[#d5e2f0] flex items-center pl-1 pr-1 pb-0.5">
      <h1 className="flex-1 text-base leading-5">기본 트레이</h1>
      <button type="button" aria-label="고정" className="mr-[9px]">
        <svg viewBox="0 0 8 10" className="w-2 h-[10px]" fill="none" stroke="#000" strokeWidth="1.400">
          <path d="M2 6 V1 H6 V6 M0 6.300 H8 M4 6 V10 M5.300 1 V6" />
        </svg>
      </button>
      <button type="button" aria-label="닫기" className="w-3 h-3 bg-[#c2504c] flex items-center justify-center">
        <svg viewBox="0 0 6 6" className="w-1.5 h-1.5"><path d="M0.500 0.500 L5.500 5.500 M5.500 0.500 L0.500 5.500" stroke="#fff" strokeWidth="1.500" /></svg>
      </button>
    </div>
    <div className="flex flex-1 min-h-0">
      <div className="flex-1 min-w-0 flex flex-col text-xs leading-4">
        <section className="h-[93px] shrink-0">
          <h2 className="pl-1 text-[13px]">표시:</h2>
          <div className="pl-[74px] pt-[3px] flex flex-col">
            <Tick label="면에" checked className="h-[22px]" />
            <Tick label="바닥에" checked className="h-[22px]" />
            <Tick label="가장자리에" className="h-[22px]" />
          </div>
        </section>
        <section className="h-[172px] shrink-0">
          <SectionHeader title="가장자리 부드럽게" />
          <div className="pl-[9px] text-[#a3a3a3]">
            <label htmlFor="angle" className="block pt-[10px]">법선 간 각도:</label>
            <output htmlFor="angle" className="block pt-[10px] pl-[126px] text-[13px]">17.3&nbsp; 도</output>
            <input
              id="angle"
              type="range"
              min="0"
              max="180"
              defaultValue="19"
              disabled
              className="block appearance-none w-[237px] h-[3px] mt-[20px] ml-[7px] border-t-2 border-b border-t-[#8d8d8d] border-b-white [&::-webkit-slider-thumb]:appearance-none [&::-webkit-slider-thumb]:w-[9px] [&::-webkit-slider-thumb]:h-[17px] [&::-webkit-slider-thumb]:bg-[#f6f6f6] [&::-webkit-slider-thumb]:border [&::-webkit-slider-thumb]:border-r-2 [&::-webkit-slider-thumb]:border-[#ccc] [&::-webkit-slider-thumb]:border-r-[#888] [&::-webkit-slider-thumb]:rounded-b-sm"
            />
            <div className="w-[230px] ml-[11px] mt-[9px] h-[3px] border-x border-black" />
            <div className="pt-[8px]">
              <Tick label="법선 부드럽게" checked className="h-5" />
              <Tick label="동일 평면 부드럽게" className="h-5" />
            </div>
          </div>
        </section>
        <Layers />
        <Scenes />
      </div>
      {/* Scroll bar of the tray */}
      <div className="w-[21px] shrink-0 flex flex-col items-center pt-[9px] pb-[5px] border-l border-white">
        <svg viewBox="0 0 10 7" className="w-[10px] h-[7px]"><path d="M1 6 L5 1.500 L9 6" fill="none" stroke="#555" strokeWidth="2" /></svg>
        <div className="flex-1" />
        <div className="w-[19px] h-[21px] bg-[#cdcdcd] mb-[67px]" />
        <svg viewBox="0 0 10 7" className="w-[10px] h-[7px]"><path d="M1 1 L5 5.500 L9 1" fill="none" stroke="#555" strokeWidth="2" /></svg>
      </div>
    </div>
  </aside>
);

const StatusBar = () => (
  <footer className="h-[27px] shrink-0 bg-[#f1f1f1] border-t-2 border-white flex items-start overflow-hidden text-[17px] leading-5">
    <div className="flex items-center gap-[17px] pl-[6px] pt-[7px]">
      <button type="button" aria-label="지리적 위치">
        <svg viewBox="0 0 18 18" className="w-[18px] h-[18px]" fill="none" stroke="#8b8b8b" strokeWidth="1.300">
          <circle cx="9" cy="9" r="8" />
          <path d="M9 3 C4 3 6 9 9 15 C12 9 14 3 9 3 Z" fill="#8b8b8b" stroke="none" />
        </svg>
      </button>
      <button type="button" aria-label="크레딧">
        <svg viewBox="0 0 18 18" className="w-[18px] h-[18px]" fill="none" stroke="#000" strokeWidth="1.600">
          <circle cx="9" cy="9" r="8" />
          <circle cx="9" cy="4.500" r="1.500" fill="#000" stroke="none" />
          <path d="M6.500 7 H11.500 V11 H10.500 V15 H7.500 V11 H6.500 Z" fill="#000" stroke="none" />
        </svg>
      </button>
      <button type="button" aria-label="로그인">
        <svg viewBox="0 0 18 18" className="w-[18px] h-[18px]" fill="#8b8b8b">
          <circle cx="9" cy="9" r="8" fill="none" stroke="#8b8b8b" strokeWidth="1.300" />
          <circle cx="9" cy="6.500" r="3.500" />
          <path d="M3 14 Q4 10.500 9 10.500 Q14 10.500 15 14 Q9 20 3 14 Z" />
        </svg>
      </button>
    </div>
    <div className="w-px h-[14px] mt-[9px] ml-[13px] mr-[10px] bg-[#999]" />
    <p className="flex-1 pt-[5px] whitespace-nowrap">
      손잡이를 잡고 움직여 개체의 배율을 조절하십시오. Ctrl = 중심 정보. Shift = 균일 토글
    </p>
    <div className="w-px h-[14px] mt-[9px] mr-[10px] bg-[#888]" />
    <label htmlFor="measure" className="pt-[5px] w-[77px]">파랑 배율</label>
    <input id="measure" defaultValue="0.90" className="w-[250px] h-6 mt-1 mr-[5px] px-[3px] bg-white border border-b-0 border-[#a9b8c6] text-base leading-5" />
  </footer>
);

const App = () => {
  const [tool, setTool] = useState('scale');

  return (
    <div className="h-screen bg-black py-[42px] flex flex-col text-black font-['Open_Sans','Noto_Sans_CJK_KR',sans-serif] overflow-hidden">
      <MenuBar />
      <Toolbar tool={tool} onSelect={setTool} />
      <div className="flex flex-1 min-h-0 bg-[#f1f1f1]">
        <SideTools tool={tool} onSelect={setTool} />
        <Viewport />
        <Tray />
      </div>
      <StatusBar />
    </div>
  );
};

export default App;
